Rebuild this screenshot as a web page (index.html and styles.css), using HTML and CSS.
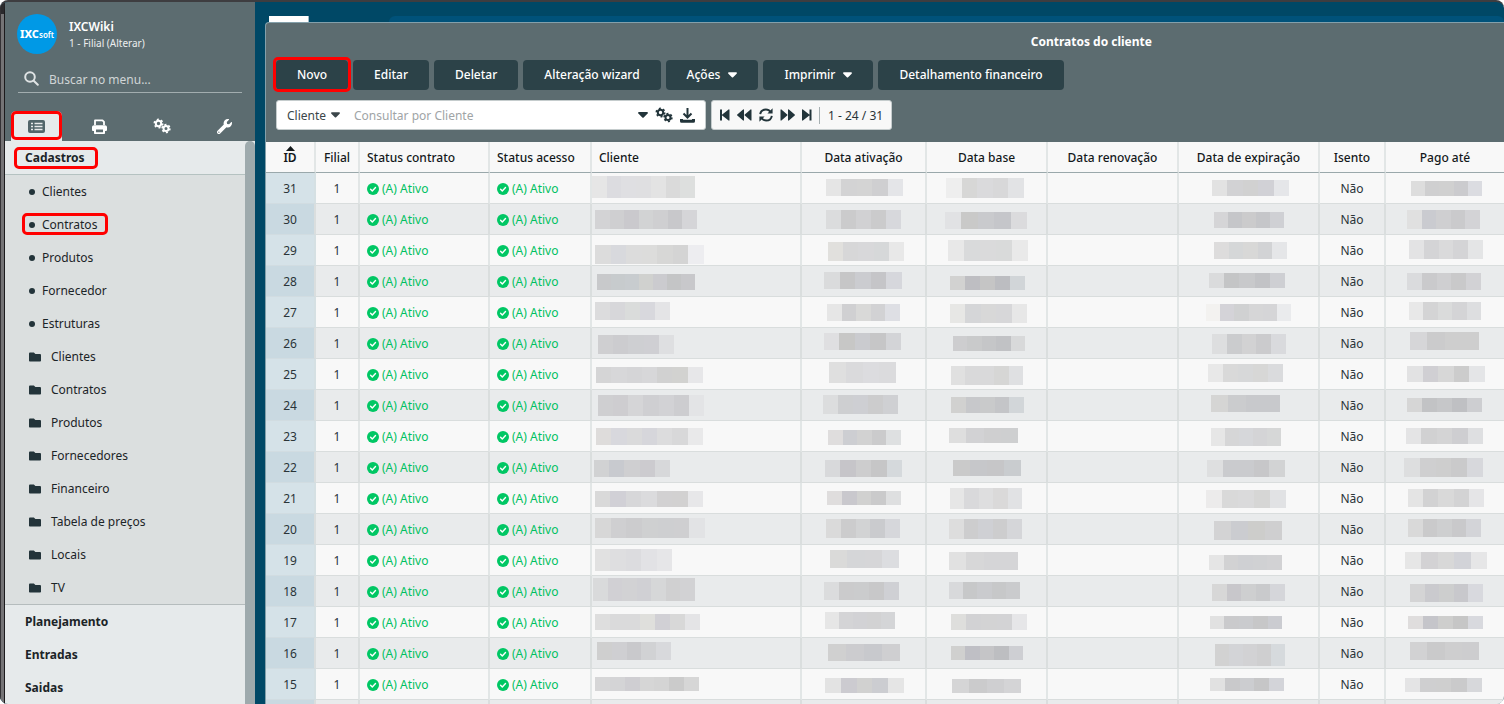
FILE: index.html
```html
<!DOCTYPE html>
<html lang="pt-BR">
<head>
<meta charset="utf-8">
<title>Contratos do cliente</title>
<link rel="stylesheet" href="styles.css">
</head>
<body>
<svg class="defs" aria-hidden="true">
  <symbol id="gears" viewBox="0 0 18 16">
    <g fill="none" stroke="currentColor">
      <circle cx="5.500" cy="5.500" r="2.700" stroke-width="2"/>
      <circle cx="5.500" cy="5.500" r="4.200" stroke-width="1.600" stroke-dasharray="2 2.398"/>
      <circle cx="13" cy="10.500" r="2.500" stroke-width="2"/>
      <circle cx="13" cy="10.500" r="3.900" stroke-width="1.600" stroke-dasharray="2 2.084"/>
    </g>
  </symbol>
  <symbol id="folder" viewBox="0 64 512 384"><path fill="currentColor" d="M464 128H272l-64-64H48C21.490 64 0 85.490 0 112v288c0 26.510 21.490 48 48 48h416c26.510 0 48-21.490 48-48V176c0-26.510-21.490-48-48-48z"/></symbol>
  <symbol id="caret" viewBox="0 0 10 6"><path fill="currentColor" d="M1 0h8c.9 0 1.300 1 .6 1.600L5.700 5.500c-.4.4-1 .4-1.400 0L.4 1.600C-.3 1 .1 0 1 0z"/></symbol>
  <symbol id="check" viewBox="0 0 12 12"><circle cx="6" cy="6" r="6" fill="currentColor"/><path d="M3.600 6.200l1.700 1.700 3.200-3.400" fill="none" stroke="#fff" stroke-width="1.400" stroke-linecap="round" stroke-linejoin="round"/></symbol>
</svg>

<div class="app">
  <div class="edge"></div>
  <aside class="sidebar">
    <header class="profile">
      <div class="logo"><b>IXC</b><span>soft</span></div>
      <div class="profile-text">
        <div class="profile-name">IXCWiki</div>
        <a class="profile-branch" href="#">1 - Filial (Alterar)</a>
      </div>
    </header>
    <label class="search">
      <svg width="15" height="15" viewBox="0 0 15 15" fill="none" stroke="currentColor" stroke-width="2" stroke-linecap="round"><circle cx="6" cy="6" r="4.800"/><path d="M9.700 9.700l4.100 4.100"/></svg>
      <input type="text" placeholder="Buscar no menu..." aria-label="Buscar no menu">
    </label>
    <nav class="tabs">
      <button class="tab tab-active marked" aria-label="Cadastros">
        <svg width="17" height="13" viewBox="0 0 17 13"><rect width="17" height="13" rx="2" fill="#52656a"/><path d="M3 3.500h2M3 6.500h2M3 9.500h2M6.500 3.500h8M6.500 6.500h8M6.500 9.500h8" stroke="#e8eaeb" stroke-width="1.400"/></svg>
      </button>
      <button class="tab" aria-label="Imprimir">
        <svg width="15" height="15" viewBox="0 0 15 15"><path fill="none" stroke="currentColor" stroke-width="1.800" stroke-linejoin="round" d="M3 6V1.400h7.500L12 2.900V6"/><path fill="currentColor" fill-rule="evenodd" d="M2 6.200h11c1.100 0 2 .8 2 1.900v3c0 .5-.4.900-.9.900H13v2c0 .6-.4 1-1 1H3c-.6 0-1-.4-1-1v-2H.9c-.5 0-.9-.4-.9-.9v-3c0-1.100.9-1.900 2-1.900zM4 10.500v2.700h7v-2.700z"/></svg>
      </button>
      <button class="tab" aria-label="Configurações"><svg width="18" height="16"><use href="#gears"/></svg></button>
      <button class="tab" aria-label="Ferramentas">
        <svg width="15" height="15" viewBox="0 0 512 512"><path fill="currentColor" d="M507.730 109.100c-2.240-9.030-13.540-12.090-20.120-5.510l-74.360 74.360-67.880-11.310-11.310-67.880 74.360-74.360c6.620-6.620 3.430-17.900-5.660-20.160-47.380-11.740-99.550.91-136.580 37.930-39.640 39.640-50.550 97.100-34.050 147.200L18.740 402.760c-24.990 24.990-24.990 65.510 0 90.500 24.990 24.990 65.510 24.990 90.500 0l213.210-213.210c50.120 16.710 107.470 5.680 147.370-34.220 37.070-37.070 49.700-89.320 37.910-136.730zM64 472c-13.250 0-24-10.750-24-24 0-13.260 10.750-24 24-24s24 10.740 24 24c0 13.250-10.750 24-24 24z"/></svg>
      </button>
    </nav>
    <div class="menu-wrap">
      <nav class="menu">
        <a class="section section-open" href="#"><span class="mark">Cadastros</span></a>
        <div class="group">
          <a class="item" href="#"><i class="dot"></i>Clientes</a>
          <a class="item item-marked" href="#"><i class="dot"></i>Contratos</a>
          <a class="item" href="#"><i class="dot"></i>Produtos</a>
          <a class="item" href="#"><i class="dot"></i>Fornecedor</a>
          <a class="item" href="#"><i class="dot"></i>Estruturas</a>
          <a class="item folder" href="#"><svg width="12" height="10"><use href="#folder"/></svg>Clientes</a>
          <a class="item folder" href="#"><svg width="12" height="10"><use href="#folder"/></svg>Contratos</a>
          <a class="item folder" href="#"><svg width="12" height="10"><use href="#folder"/></svg>Produtos</a>
          <a class="item folder" href="#"><svg width="12" height="10"><use href="#folder"/></svg>Fornecedores</a>
          <a class="item folder" href="#"><svg width="12" height="10"><use href="#folder"/></svg>Financeiro</a>
          <a class="item folder" href="#"><svg width="12" height="10"><use href="#folder"/></svg>Tabela de preços</a>
          <a class="item folder" href="#"><svg width="12" height="10"><use href="#folder"/></svg>Locais</a>
          <a class="item folder" href="#"><svg width="12" height="10"><use href="#folder"/></svg>TV</a>
        </div>
        <a class="section" href="#">Planejamento</a>
        <a class="section" href="#">Entradas</a>
        <a class="section" href="#">Saidas</a>
      </nav>
      <div class="scrollbar"></div>
    </div>
  </aside>

  <main class="desktop">
    <div class="desktop-top"><div class="white-tab"></div><div class="blue-tab"></div></div>
    <section class="window">
      <h1 class="title">Contratos do cliente</h1>
      <div class="toolbar">
        <button class="btn btn-marked">Novo</button>
        <button class="btn">Editar</button>
        <button class="btn">Deletar</button>
        <button class="btn">Alteração wizard</button>
        <button class="btn">Ações<svg width="9" height="6"><use href="#caret"/></svg></button>
        <button class="btn">Imprimir<svg width="9" height="6"><use href="#caret"/></svg></button>
        <button class="btn">Detalhamento financeiro</button>
      </div>
      <div class="filters">
        <div class="query">
          <label class="field"><select aria-label="Campo"><option>Cliente</option></select><svg width="9" height="6"><use href="#caret"/></svg></label>
          <input class="query-input" type="text" placeholder="Consultar por Cliente" aria-label="Consultar por Cliente">
          <button class="icon" aria-label="Opções"><svg width="10" height="6"><use href="#caret"/></svg></button>
          <button class="icon" aria-label="Configurar"><svg width="18" height="16"><use href="#gears"/></svg></button>
          <button class="icon" aria-label="Baixar"><svg width="15" height="15" viewBox="0 0 15 15" fill="none" stroke="currentColor" stroke-width="2"><path d="M7.500 0v9M3.500 5.500l4 4 4-4"/><path d="M1.500 11v2.300h12V11" stroke-width="3" stroke-linejoin="round"/></svg></button>
        </div>
        <div class="pager">
          <button class="icon" aria-label="Primeira"><svg width="10" height="12" viewBox="0 0 10 12" fill="currentColor"><path d="M0 .5h2v11H0zM9.500 1v10c0 .6-.5.8-.9.500L2.200 6.600c-.4-.3-.4-.9 0-1.200L8.600.5c.4-.3.9-.1.9.5z"/></svg></button>
          <button class="icon" aria-label="Anterior"><svg width="15" height="12" viewBox="0 0 15 12" fill="currentColor"><path d="M7 1v10c0 .6-.5.800-.9.500L.3 6.600c-.4-.3-.4-.9 0-1.200L6.100.5c.4-.3.9-.1.9.5zM14.500 1v10c0 .6-.5.800-.9.500L7.800 6.600c-.4-.3-.4-.9 0-1.200L13.600.5c.4-.3.9-.1.9.5z"/></svg></button>
          <button class="icon" aria-label="Atualizar"><svg width="14" height="14" viewBox="0 0 14 14" fill="none" stroke="currentColor" stroke-width="1.900"><path d="M1.200 6.200C1.600 3.300 4 1.500 6.900 1.500c2 0 3.700 1 4.800 2.700M12.800 7.800c-.4 2.900-2.800 4.700-5.700 4.700-2 0-3.700-1-4.800-2.700"/><path d="M13.600.3v5.200H8.400zM.4 13.700V8.500h5.200z" fill="currentColor" stroke="none"/></svg></button>
          <button class="icon" aria-label="Próxima"><svg width="15" height="12" viewBox="0 0 15 12" fill="currentColor"><path d="M.5 1v10c0 .6.500.800.9.500l5.800-4.900c.4-.3.4-.9 0-1.200L1.400.5C1 .2.5.4.5 1zM8 1v10c0 .6.500.800.9.500l5.800-4.900c.4-.3.4-.9 0-1.200L8.900.5C8.500.2 8 .4 8 1z"/></svg></button>
          <button class="icon" aria-label="Última"><svg width="10" height="12" viewBox="0 0 10 12" fill="currentColor"><path d="M7.500.5h2v11h-2zM0 1v10c0 .6.500.800.9.500l6.400-4.900c.4-.3.4-.9 0-1.200L.9.5C.5.2 0 .4 0 1z"/></svg></button>
          <span class="count">1 - 24 / 31</span>
        </div>
      </div>
      <table class="grid">
        <colgroup><col class="c-id"><col class="c-filial"><col class="c-contrato"><col class="c-acesso"><col class="c-cliente"><col class="c-ativacao"><col class="c-base"><col class="c-renov"><col class="c-exp"><col class="c-isento"><col></colgroup>
        <thead><tr><th class="sorted"><svg class="sort" width="9" height="5" viewBox="0 0 9 5"><path d="M4.500 0L9 5H0z" fill="#14191b"/></svg>ID</th><th>Filial</th><th class="left">Status contrato</th><th class="left">Status acesso</th><th class="left">Cliente</th><th>Data ativação</th><th>Data base</th><th>Data renovação</th><th>Data de expiração</th><th>Isento</th><th>Pago até</th></tr></thead>
        <tbody id="rows"></tbody>
      </table>
    </section>
  </main>
</div>
<script src="rows.js"></script>
</body>
</html>
```
FILE: rows.js
```javascript
// Masked values per row: cliente, ativação, base, expiração, pago até.
// Each mask: left, top, width, height, then its tile colours.
const masks = `
0 3 103 22 e6e6e6 dcdce0 dfdfe2 dfdfe1 e3e3e3 dadada dddfde|24 6 77 17 e5e5e5 d3d3d4 d4d4d4 cfcfd1 e4e5e8|19 5 78 20 eeeeee d7d7d6 dadadc d8d8d9 e2e3e5|33 7 77 16 e2e2e2 d2d2d4 d1d1d1 d1d1d6 e5e6e9|25 8 71 15 dddddd cfcfd0 d0d0d0 cbcbce dbdce1
3 6 102 19 d3d3d5 cfcfd1 cac9cd d2d3d4 cfcfd1 c8c8cb d5d5d8|24 6 75 19 dbdcdd cbcbcc d1d1d3 cbcbcc d7d8dc|18 8 82 17 e1e2e4 c9c9c8 c9cacd c5c6ca dbdbdd|35 8 70 16 d5d5d7 c5c6c9 cbcbcc c5c6c9 cfd0d4|21 6 73 19 e0e0e0 cacbd0 cfcfd1 cacacc d3d3d6
3 10 109 19 dcdcdc d8d9dd dcdcdc dcdcdb d7d7d6 d4d4d4 ededf0|26 7 76 19 e1e0dd d7d7d8 d8d8da d6d8d9 e8e8e8|21 5 80 21 e8e8e8 d9dadb dadadb d9dada e9e9e9|35 7 73 17 dddcdc d5d7d8 d8d8d7 d2d3d5 e5e6e8|23 5 74 19 e3e3e4 d4d4d6 dadadb d4d4d6 e4e5e6
5 8 98 16 c8c9cb c7cbcd c8cccf d0d1cf cbcbcf c4c5c6 c8c8cb|22 6 78 17 dadbdc c6c6c7 cbccd0 c5c5c8 d6d7dc|23 10 75 14 d2d2d1 bebec2 c5c5c5 bcbdc1 d1d5d8|30 7 76 15 dadbdc c4c5c6 c8c9cb c2c3c6 cecfd3|21 7 74 17 dadbdd cacacc cfcfd1 c9c9ca d2d2d5
3 5 75 18 dcdcdd d7d7da dadcdb d8d8dd e4e4e6|25 7 73 17 e6e6e6 d0d0d2 d9d9d8 d2d2d4 dedfe4|23 7 77 19 e7e7e5 d5d6d8 d8d8d8 d7d7d9 e7e7e7|27 7 85 17 f3f2f0 d4d3d8 d0d1d2 d6d6d7 d5d5d7 eaebed|23 5 72 18 e8e8e8 d4d4d5 dadbdb d4d4d6 dddee0
6 7 76 19 cfcfd1 cccccf cecfd2 cfcfd3 dedfe1|22 5 77 17 dfdfe1 c7c7c6 cacbcf c6c6c7 d3d4d7|26 8 72 15 cdcdcf c9cacb c5c6c8 c1c2c5 d8d9da|33 6 74 20 dddedf cbccce d2d2d3 cbcbcd d9dadd|24 4 69 18 d6d6d8 cbcbcc cecece cecece
4 8 107 16 d5d5d6 d7d7d9 d5d5d7 d7d7d9 d1d1d1 d2d2d0 e7e7e9|27 3 67 21 dfdfdf dadadc dcdcdf dbdbdd|24 7 72 19 e0e0e0 d9d9da d9d9da d6d6d5 dfe0e2|29 5 75 18 e8e8e8 d9d9d9 d7d8d9 d7d7d6 dadbdd|21 7 78 16 e2e2e3 d0cfd3 d7d7d7 cccccc e4e5e7
6 5 106 21 cfcfd1 cecdd0 d5d5d7 cfcfd2 d2d2d5 cdcdd0 e3e4e6|21 5 75 19 dcddde cecfd1 cecfd3 cccccd cfd0d3|24 7 73 16 d1d1d0 c7c8cb c9cacb c4c5c8 d2d6d9|32 5 69 17 d5d5d4 cbccce c8c9cc c8c9cc|21 8 75 14 d6d6d6 c2c3c5 c6c7c9 bfc0c3 cdced1
4 7 107 17 dedcdb d8d8dd dadadb d6d6db dcdcdd d8d8d9 e9e9ea|26 9 73 15 dfdddd cdced2 d2d2d2 cbcbcc dee0e1|22 7 69 15 dedede d2d2d4 cfcfd0 cecfd0|32 7 70 18 e6e6e6 d6d6d7 d6d7da d4d4d6 d6d7d7|20 7 77 16 e4e4e5 d1d1d2 d4d4d5 ceced1 dedfe1
2 8 76 17 d1d2d3 c8cacf cfcfd1 cccbcf d7d8da|23 8 77 17 d8d9db c6c5c9 cdcdce c6c6c7 d5d9dc|26 8 68 16 cacaca c6c7ca c6c6c8 c9cccf|28 8 78 17 dedfe0 cacbce cacbce c7c7c9 d2d3d4|18 6 79 19 dddedf cfcfd0 cecece cacacb d7d8dc
3 8 108 16 d9d9d9 d1d0d6 d7d7d9 dbdbdd d2d1d2 d2d1d1 e7e7e9|25 8 74 14 dfdddd c9c8cd d1d1d0 cacacb dedfe0|23 5 72 21 e6e6e6 d9d9db dededf dad9d9 e1e2e4|27 7 80 18 ecebeb d9d9d9 dadadb d6d6d5 e1e2e4|22 6 76 18 e4e4e4 d2d2d3 d9d9d9 d3d3d4 e5e5e7
3 4 110 20 d7d7d7 cfcfd1 ccccce cfd0d1 cecfd1 cfcfd1 e2e3e5|24 5 74 19 dadada cccccd d2d3d4 cacbce d6d7db|22 5 73 20 dddddd cdcdce cfd0d4 cdcdce d5d6d9|35 7 68 19 d3d3d4 cbccd0 cdcdcb cfcfd0|22 5 73 18 d9d9d9 cacacb cecfd0 c9c9cb d3d4d8
3 4 77 22 e1e1e1 dedee0 dcdcdf e2e2e5 e6e6e8|28 5 69 18 dadad9 d5d6d8 d6d6d8 dcdde0|22 7 69 18 e1e1e1 d7d7d8 d5d5d7 d5d5d7|30 10 73 15 e5e5e5 d2d2d3 cfd0d3 d0d1d3 d2d2d4|19 7 82 17 e6e6e6 d3d2d4 d8d8d8 d2d3d8 e6e6e7
1 2 102 23 d9dadb d1d0d4 d2d2d4 d0d0d4 d6d7d8 d0d0d1 d2d2d4|22 6 75 18 dbdcdd cbcbcc cbcccd c8c8c9 cfd0d4|22 6 71 17 d8d9db c7c8c9 cacbce c7c8c9 cacbcd|33 8 73 17 d7d7d7 c8c7cb cecfd0 c9cacc d5d6da|24 8 73 18 d4d4d5 cacace cdcece c8c8cc d8d9de
3 7 105 16 dedede dadadb dadadb dfdfdc d1d0d5 d8d8d8 e4e4e6|23 5 70 17 e6e6e6 d4d4d6 d2d2d5 d2d2d3 d4d5d7|24 7 76 16 dededc d2d2d4 d3d3d4 d3d3d5 e6e6e8|31 9 72 13 e1e1e1 cacacc cacbce c7c7c8 cbccd1|22 9 75 13 dfdddd c5c5ca cececd c6c6c6 d8d9de
5 4 74 18 cfcfcf cfcfd2 c9c9cc d1d2d4 d8d9dc|26 6 72 17 d0d0d0 cccccf c8c9cd cfcfd1|24 8 72 14 d0d0cf bfbfc5 c5c5c7 bdbec1 cecfd3|36 6 70 22 d2d2d2 d3d4d7 d2d2d4 cfcfd0 d6dadd|24 4 69 18 d2d2d3 cacacb cececf cdcdcf
3 8 104 14 d6d6d7 d4d4d6 cfced2 d6d6d6 d4d4d4 cbcbcb d6d6d6|23 9 79 15 e3e3e3 cccbd0 d1d1d0 cccdd1 e5e5e5|25 10 69 14 d5d5d6 cbcbcc cfcfd1 d4d4d6|31 9 74 13 e1e1e1 c9c9cb cccdd0 c6c6c7 d3d4d9|19 9 77 14 e4e4e5 cfcfd0 cfcfcf cacacb d7d8db
`.trim().split("\n").map(line => line.split("|"));

function mask(spec) {
  const [x, y, w, h, ...tiles] = spec.split(" ");
  const edge = i => Math.round(i * w / tiles.length);
  const rects = tiles.map((c, i) =>
    `<rect x="${+x + edge(i)}" y="${y}" width="${edge(i + 1) - edge(i)}" height="${h}" fill="#${c}"/>`).join("");
  return `<svg class="mask" aria-hidden="true">${rects}</svg>`;
}

const status = '<span class="status"><svg width="12" height="12"><use href="#check"/></svg>(A) Ativo</span>';
const rows = masks.map((m, i) =>
  `<tr><td class="id">${31 - i}</td><td>1</td><td class="left">${status}</td><td class="left">${status}</td>` +
  `<td class="masked">${mask(m[0])}</td><td class="masked">${mask(m[1])}</td><td class="masked">${mask(m[2])}</td>` +
  `<td></td><td class="masked">${mask(m[3])}</td><td>Não</td><td class="masked">${mask(m[4])}</td></tr>`);
rows.push(`<tr><td class="id"></td>${"<td></td>".repeat(10)}</tr>`);
document.getElementById("rows").innerHTML = rows.join("");
```
FILE: styles.css
```css
*, *::after { box-sizing: border-box; }
body { margin: 0; background: #fff; font: 12px/16px "Noto Sans", sans-serif; color: #2a3438; }
button, input, select { font: inherit; color: inherit; border: 0; padding: 0; margin: 0; background: none; }
a { color: inherit; text-decoration: none; }
svg { display: block; flex: none; }
.defs { position: absolute; width: 0; height: 0; }

.app { display: flex; height: 100vh; overflow: hidden; border-top: 2px solid #3e3d40; border-radius: 8px; background: #004866; }
.edge { width: 5px; flex: none; background: #757476; border-left: 1px solid #343235; border-right: 1px solid #1c1b1d; border-top: 12px solid #2b2a2d; }

.sidebar { width: 250px; flex: none; display: flex; flex-direction: column; background: #5c6c70; color: #fff; }
.profile { display: flex; align-items: center; gap: 12px; padding: 12px 12px 0; }
.profile-text { padding-top: 2px; }
.logo { width: 40px; height: 40px; border-radius: 50%; background: #0099e6; display: flex; align-items: baseline; justify-content: center; line-height: 40px; font-size: 8px; font-weight: 600; }
.logo b { font-size: 11px; font-weight: 800; }
.profile-name { font-weight: 600; }
.profile-branch { display: block; font-size: 10px; color: #eceeef; }
.search { display: flex; align-items: center; gap: 10px; height: 28px; margin: 11px 13px 0; padding: 0 6px; border-bottom: 1px solid #a2adaf; color: #dfe3e4; }
.search input { flex: 1; min-width: 0; height: 26px; padding-top: 2px; outline: 0; }
.search input::placeholder { color: #d0d5d6; opacity: 1; }
.tabs { display: flex; justify-content: space-between; margin: 18px 5px 0 6px; height: 30px; }
.tab { position: relative; width: 51px; height: 30px; display: flex; align-items: center; justify-content: center; color: #fff; }
.tab-active { background: #e6eaeb; border-radius: 5px 5px 0 0; }
.marked::after { content: ""; position: absolute; inset: 0 0 1px; border: 3px solid #f00; border-radius: 5px; }
.menu-wrap { flex: 1; min-height: 0; display: flex; background: #e6eaeb; color: #1b2427; }
.menu { flex: 1; overflow: hidden; }
.scrollbar { width: 10px; background: #9eaaad; border-radius: 5px 5px 0 0; }
.section { display: flex; align-items: center; height: 33px; padding-left: 20px; font-weight: 700; }
.section-open { height: 34px; border-bottom: 1px solid #b5c2c1; }
.mark { position: relative; }
.mark::after { content: ""; position: absolute; inset: -3px -13px -3px -11px; border: 3px solid #f00; border-radius: 5px; }
.group { background: #dbdfdf; border-bottom: 1px solid #b5bcbd; }
.item { position: relative; display: flex; align-items: center; gap: 7px; height: 33px; padding-left: 24px; }
.dot { width: 6px; height: 6px; border-radius: 50%; background: #23343a; }
.folder { gap: 10px; }
.item svg { color: #23343a; }
.item-marked::after { content: ""; position: absolute; left: 17px; top: 5px; width: 86px; height: 22px; border: 3px solid #f00; border-radius: 5px; }

.desktop { flex: 1; min-width: 0; display: flex; flex-direction: column; padding-left: 10px; }
.desktop-top { display: flex; gap: 80px; height: 20px; padding: 14px 0 0 4px; }
.white-tab { width: 40px; height: 6px; background: #fff; border-right: 1px solid #9fb9c6; }
.blue-tab { flex: 1; background: #00527a; border-radius: 14px 14px 0 0; }
.window { flex: 1; min-height: 0; overflow: hidden; background: #5c6c70; border: solid #83a0ab; border-width: 1px 0 0 1px; border-radius: 4px 0 0 0; }
.title { margin: 0; padding: 10px 0 0 calc(100% / 3); text-align: center; font-size: 12px; line-height: 17px; font-weight: 700; color: #fff; }
.toolbar { display: flex; gap: 5px; padding: 10px 10px 0; }
.btn { position: relative; display: flex; align-items: center; gap: 8px; height: 30px; padding: 0 21px; border-radius: 4px; background: #2c4248; color: #fff; font-weight: 500; white-space: nowrap; }
.btn-marked::after { content: ""; position: absolute; inset: -3px -3px -2px; border: 3px solid #f00; border-radius: 5px; }
.filters { display: flex; gap: 5px; padding: 10px 10px 12px; }
.query, .pager { display: flex; align-items: center; height: 30px; background: #fff; border: 1px solid #c5cccd; border-radius: 3px; }
.query { width: 430px; padding: 0 10px; gap: 7px; }
.field { display: flex; align-items: center; gap: 4px; color: #3b464a; }
.field select { appearance: none; height: 20px; padding-top: 2px; }
.query-input { flex: 1; min-width: 0; height: 20px; margin-left: 7px; outline: 0; }
.query-input::placeholder { color: #a0a4a6; opacity: 1; }
.icon { color: #22343a; }
.pager { background: #f8f8f8; padding: 0 8px; gap: 7px; }
.count { border-left: 1px solid #a7b0b2; padding: 1px 0 0 8px; white-space: nowrap; }

.grid { width: 100%; table-layout: fixed; border-collapse: separate; border-spacing: 0; background: #f8f8f8; }
.c-id { width: 50px; }
.c-filial { width: 44px; }
.c-contrato { width: 130px; }
.c-acesso { width: 102px; }
.c-cliente { width: 210px; }
.c-ativacao { width: 125px; }
.c-base { width: 121px; }
.c-renov { width: 131px; }
.c-exp { width: 141px; }
.c-isento { width: 66px; }
th, td { height: 31px; padding: 2px 0 0; text-align: center; white-space: nowrap; border-right: 2px solid #e2e6e6; border-bottom: 1px solid #d9dddd; }
th { font-weight: 500; color: #14191b; border-bottom-color: #9aa8ab; }
th:last-child, td:last-child { border-right: 0; }
.left { text-align: left; padding-left: 7px; }
.sorted { position: relative; font-weight: 600; }
.sort { position: absolute; left: 20px; top: 4px; }
tbody tr:nth-child(even) { background: #e9ebec; }
tbody tr:nth-child(even) td { border-right-color: #dadede; }
.id { background: #d5e2e8; border-right-color: #d5e0e3; border-bottom-color: #d1dce1; }
tbody tr:nth-child(even) .id { background: #c9d9e1; }
.status { display: flex; align-items: center; gap: 3px; color: #00c161; }
.status svg { color: #00c764; }
.masked { padding: 0; }
.mask { width: 100%; height: 30px; }
```
